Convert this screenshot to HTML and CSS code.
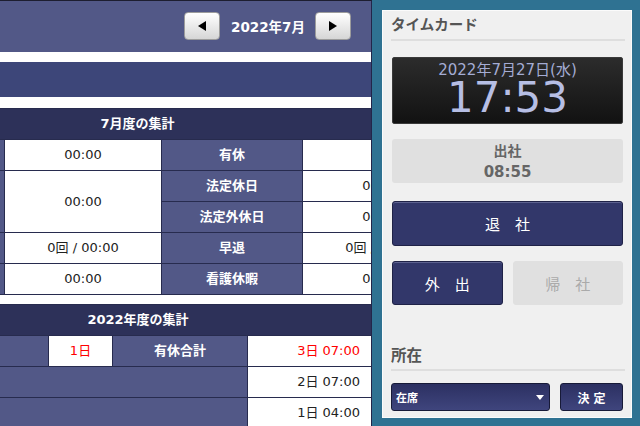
FILE: index.html
```html
<!DOCTYPE html>
<html lang="ja">

<head>
    <meta charset="UTF-8">
    <meta name="viewport" content="width=device-width, initial-scale=1.0">
    <title>勤怠 - タイムカード</title>
    <link rel="stylesheet" href="styles.css">
</head>

<body>
    <div class="page">
        <main class="main">
            <header class="topbar">
                <nav class="month-nav">
                    <button class="nav-btn">
                        <svg viewBox="0 0 8 10" width="8" height="10"><path d="M8 0V10L0 5Z" fill="#000" /></svg>
                    </button>
                    <span class="month">2022年7月</span>
                    <button class="nav-btn">
                        <svg viewBox="0 0 8 10" width="8" height="10"><path d="M0 0V10L8 5Z" fill="#000" /></svg>
                    </button>
                </nav>
            </header>

            <div class="band"></div>

            <!-- 月の集計 -->
            <table class="sum sum-month">
                <colgroup>
                    <col class="c-lbl">
                    <col class="c-val">
                    <col class="c-lbl">
                    <col class="c-val">
                </colgroup>
                <tr>
                    <th class="sum-head" colspan="4">7月度の集計</th>
                </tr>
                <tr>
                    <th>総労働時間</th>
                    <td>00:00</td>
                    <th>有休</th>
                    <td>0日</td>
                </tr>
                <tr>
                    <th rowspan="2">休日労働</th>
                    <td rowspan="2">00:00</td>
                    <th>法定休日</th>
                    <td>00:00</td>
                </tr>
                <tr>
                    <th>法定外休日</th>
                    <td>00:00</td>
                </tr>
                <tr>
                    <th>遅刻</th>
                    <td>0回 / 00:00</td>
                    <th>早退</th>
                    <td>0回 / 00:00</td>
                </tr>
                <tr>
                    <th>深夜</th>
                    <td>00:00</td>
                    <th>看護休暇</th>
                    <td>00:00</td>
                </tr>
            </table>

            <!-- 年度の集計 -->
            <table class="sum sum-year">
                <colgroup>
                    <col class="c-y1">
                    <col class="c-y2">
                    <col class="c-y3">
                    <col class="c-y4">
                </colgroup>
                <tr>
                    <th class="sum-head" colspan="4">2022年度の集計</th>
                </tr>
                <tr>
                    <th>有休付与</th>
                    <td class="red">1日</td>
                    <th>有休合計</th>
                    <td class="red num">3日 07:00</td>
                </tr>
                <tr>
                    <th colspan="3"></th>
                    <td class="num">2日 07:00</td>
                </tr>
                <tr>
                    <th colspan="3"></th>
                    <td class="num">1日 04:00</td>
                </tr>
            </table>
        </main>

        <aside class="side">
            <div class="card">
                <h2 class="card-title">タイムカード</h2>

                <div class="clock">
                    <div class="clock-date">2022年7月27日(水)</div>
                    <div class="clock-time">17:53</div>
                </div>

                <div class="punched">
                    <div class="punched-label">出社</div>
                    <div class="punched-time">08:55</div>
                </div>

                <button class="btn btn-wide">退　社</button>

                <div class="btn-row">
                    <button class="btn">外　出</button>
                    <button class="btn btn-off">帰　社</button>
                </div>

                <h2 class="card-title title-where">所在</h2>

                <div class="where-row">
                    <div class="select">
                        <span>在席</span>
                        <svg viewBox="0 0 8 5" width="8" height="5"><path d="M0 0H8L4 5Z" fill="#fff" /></svg>
                    </div>
                    <button class="btn btn-small">決 定</button>
                </div>
            </div>
        </aside>
    </div>
</body>

</html>
```

FILE: styles.css
```css
body {
    margin: 0;
    background: #fff;
    font-family: "DejaVu Sans", "Noto Sans CJK JP", sans-serif;
}

.page {
    display: flex;
    height: 426px;
    overflow: hidden;
}

/* left side */
.main {
    flex: none;
    width: 371px;
    overflow: hidden;
    border-top: 1px solid #1d1e30;
    border-right: 1px solid #23264a;
}

.topbar {
    height: 51px;
    background: #525887;
    display: flex;
    justify-content: flex-end;
    padding: 11px 20px 0 0;
    box-sizing: border-box;
}

.month-nav {
    display: flex;
    align-items: center;
    height: 28px;
}

.nav-btn {
    width: 36px;
    height: 28px;
    padding: 0;
    border: 1px solid #9c9c9c;
    border-radius: 4px;
    background: linear-gradient(#ffffff, #d6d6d6);
    display: flex;
    align-items: center;
    justify-content: center;
}

.month {
    margin: 0 10px 0 11px;
    color: #fff;
    font-weight: bold;
    font-size: 13.5px;
}

.band {
    height: 35px;
    margin: 10px 0 11px;
    background: #3d4679;
}

.sum {
    border-collapse: collapse;
    table-layout: fixed;
    width: 597px;
    margin-left: -137px;
}

.sum-year {
    margin-top: 9px;
}

.c-lbl { width: 141px; }
.c-val { width: 157px; }
.c-y1 { width: 185px; }
.c-y2 { width: 64px; }
.c-y3 { width: 135px; }
.c-y4 { width: 213px; }

.sum th,
.sum td {
    height: 30px;
    padding: 0;
    border: 1px solid #272b4e;
    text-align: center;
    font-size: 13px;
    line-height: 16px;
    white-space: nowrap;
}

.sum th {
    background: #525887;
    color: #fff;
    font-weight: bold;
}

.sum td {
    background: #fff;
    color: #222;
}

.sum .sum-head {
    background: #2d3159;
    padding-right: 48px;
}

.sum .red {
    color: #f00;
}

.sum .num {
    text-align: right;
    padding-right: 100px;
}

/* right side */
.side {
    flex: 1;
    background: #2f7292;
    padding: 10px 8px 8px 10px;
    display: flex;
}

.card {
    flex: 1;
    background: #f0f0f0;
    border: 1px solid #fbfbfb;
    padding: 0 8px 0 9px;
}

.card-title {
    margin: 4px -2px 0 -1px;
    padding-bottom: 4px;
    border-bottom: 2px solid #dedede;
    color: #555;
    font-size: 14.5px;
    line-height: 20px;
    font-weight: bold;
}

.clock {
    margin-top: 16px;
    height: 67px;
    box-sizing: border-box;
    padding-top: 3px;
    background: linear-gradient(#2c2c2c, #121212);
    border: 1px solid #3a3a3a;
    border-radius: 2px;
    text-align: center;
}

.clock-date {
    color: #a4acd4;
    font-size: 15px;
    line-height: 18px;
}

.clock-time {
    color: #b6bee4;
    font-size: 42px;
    line-height: 38px;
}

.punched {
    margin-top: 15px;
    height: 44px;
    box-sizing: border-box;
    padding-top: 2px;
    background: #e0e0e0;
    border-radius: 3px;
    text-align: center;
    color: #666;
    font-weight: bold;
}

.punched-label {
    font-size: 14px;
    line-height: 20px;
}

.punched-time {
    font-size: 15px;
    line-height: 22px;
}

.btn {
    height: 44px;
    padding: 0;
    border: 1px solid #1f2247;
    border-radius: 3px;
    background: #32376a;
    box-shadow: inset 0 1px 0 #5d6290;
    color: #fff;
    font-family: "DejaVu Sans", "Noto Sans CJK JP", sans-serif;
    font-size: 15px;
}

.btn-wide {
    display: block;
    width: 100%;
    height: 45px;
    margin-top: 18px;
}

.btn-row {
    display: flex;
    gap: 10px;
    margin-top: 15px;
}

.btn-row .btn {
    flex: 1;
}

.btn-off {
    background: #e0e0e0;
    border-color: #e0e0e0;
    box-shadow: none;
    color: #aaa;
}

.title-where {
    margin-top: 41px;
    padding-bottom: 3px;
    font-size: 15.5px;
}

.where-row {
    display: flex;
    gap: 10px;
    margin: 12px 0 0 -1px;
}

.select {
    width: 159px;
    height: 28px;
    box-sizing: border-box;
    padding: 0 5px 0 4px;
    display: flex;
    align-items: center;
    justify-content: space-between;
    border: 1px solid #171a38;
    border-radius: 3px;
    background: linear-gradient(#2c3062, #3f457d);
    color: #fff;
    font-size: 11px;
    font-weight: bold;
}

.btn-small {
    flex: 1;
    height: 28px;
    border-color: #171a38;
    background: linear-gradient(#2c3062, #3f457d);
    box-shadow: none;
    font-size: 12px;
    font-weight: bold;
}
```
